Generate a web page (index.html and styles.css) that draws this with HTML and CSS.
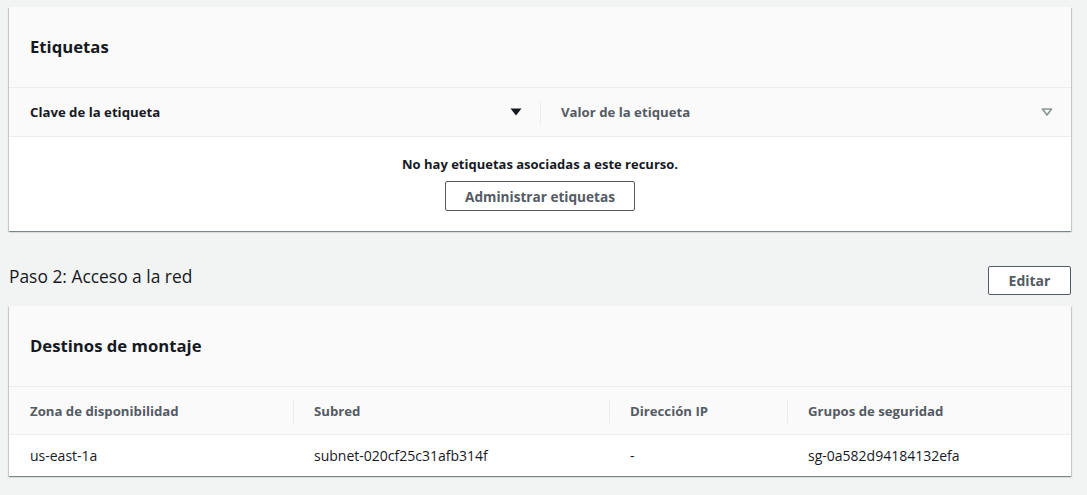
FILE: index.html
```html
<!DOCTYPE html>
<html lang="es">
<head>
<meta charset="utf-8">
<title>Detalles</title>
<link rel="stylesheet" href="styles.css">
</head>
<body>
<div class="page">
  <section class="card">
    <div class="card-head"><h2 class="card-title">Etiquetas</h2></div>
    <div class="thead tags-head">
      <div class="th">
        <span>Clave de la etiqueta</span>
        <svg class="sort" width="12" height="8" viewBox="0 0 12 8"><path d="M0.5 0.5 H11.5 L6 7.5 Z" fill="#16191f"/></svg>
      </div>
      <div class="th th-sep">
        <span>Valor de la etiqueta</span>
        <svg class="sort" width="12" height="8" viewBox="0 0 12 8"><path d="M1.5 1 H10.5 L6 7 Z" fill="none" stroke="#879596" stroke-width="1.6" stroke-linejoin="round"/></svg>
      </div>
    </div>
    <div class="empty">
      <p class="empty-text">No hay etiquetas asociadas a este recurso.</p>
      <button class="btn btn-wide">Administrar etiquetas</button>
    </div>
  </section>

  <div class="step-head">
    <h3 class="step-title">Paso 2: Acceso a la red</h3>
    <button class="btn btn-edit">Editar</button>
  </div>

  <section class="card">
    <div class="card-head"><h2 class="card-title">Destinos de montaje</h2></div>
    <div class="thead grid-cols">
      <div class="th">Zona de disponibilidad</div>
      <div class="th th-sep">Subred</div>
      <div class="th th-sep">Dirección IP</div>
      <div class="th th-sep">Grupos de seguridad</div>
    </div>
    <div class="trow grid-cols">
      <div class="td">us-east-1a</div>
      <div class="td">subnet-020cf25c31afb314f</div>
      <div class="td">-</div>
      <div class="td">sg-0a582d94184132efa</div>
    </div>
  </section>
</div>
</body>
</html>
```

FILE: styles.css
```css
* { box-sizing: border-box; }
html, body { margin: 0; padding: 0; }
body {
  background: #f2f3f3;
  font-family: "Open Sans", "Noto Sans", sans-serif;
  color: #16191f;
  width: 1087px;
  height: 495px;
  overflow: hidden;
}
.page {
  padding: 7px 16px 0 9px;
}
.card {
  background: #fff;
  box-shadow: 0 1px 1px 0 rgba(0,28,36,.3), 1px 1px 1px 0 rgba(0,28,36,.15), -1px 1px 1px 0 rgba(0,28,36,.15);
}
.card-head {
  height: 81px;
  background: #fafafa;
  border-bottom: 1px solid #eaeded;
  display: flex;
  align-items: center;
  padding: 0 21px 2px;
}
.card-title {
  margin: 0;
  font-size: 16.7px;
  font-weight: 700;
  color: #16191f;
}
.thead {
  background: #fafafa;
  border-bottom: 1px solid #eaeded;
  height: 49px;
}
.tags-head {
  display: flex;
}
.tags-head .th { flex: 1 1 0; justify-content: space-between; padding-right: 18px; }
.th {
  display: flex;
  align-items: center;
  height: 100%;
  padding-left: 21px;
  font-size: 13.2px;
  font-weight: 700;
  color: #545b64;
  position: relative;
}
.tags-head .th:first-child { color: #16191f; }
.th-sep::before {
  content: "";
  position: absolute;
  left: 0;
  top: 13px;
  height: 23px;
  border-left: 1px solid #eaeded;
}
.sort { display: block; }
.empty {
  display: flex;
  flex-direction: column;
  align-items: center;
  padding: 18px 0 20px;
}
.empty-text {
  margin: 0 0 8px;
  font-size: 13px;
  font-weight: 700;
  line-height: 18px;
  color: #16191f;
}
.btn {
  font-family: "Open Sans", "Noto Sans", sans-serif;
  font-weight: 700;
  font-size: 13.6px;
  color: #545b64;
  background: #fff;
  border: 1px solid #545b64;
  border-radius: 2px;
  height: 30px;
  padding: 0 8px;
  white-space: nowrap;
  cursor: pointer;
}
.btn-wide { width: 190px; }
.step-head {
  display: flex;
  align-items: flex-end;
  justify-content: space-between;
  padding: 35px 0 11px;
}
.step-title {
  margin: 0 0 9px;
  font-size: 17.4px;
  font-weight: 400;
  color: #16191f;
  line-height: 20px;
}
.btn-edit { width: 83px; height: 29px; font-size: 14px; }
.grid-cols {
  display: grid;
  grid-template-columns: 284px 316px 178px 1fr;
}
.thead.grid-cols { height: 48px; }
.trow { height: 41px; }
.td {
  display: flex;
  align-items: center;
  padding-left: 21px;
  font-size: 14px;
  color: #16191f;
}
```
